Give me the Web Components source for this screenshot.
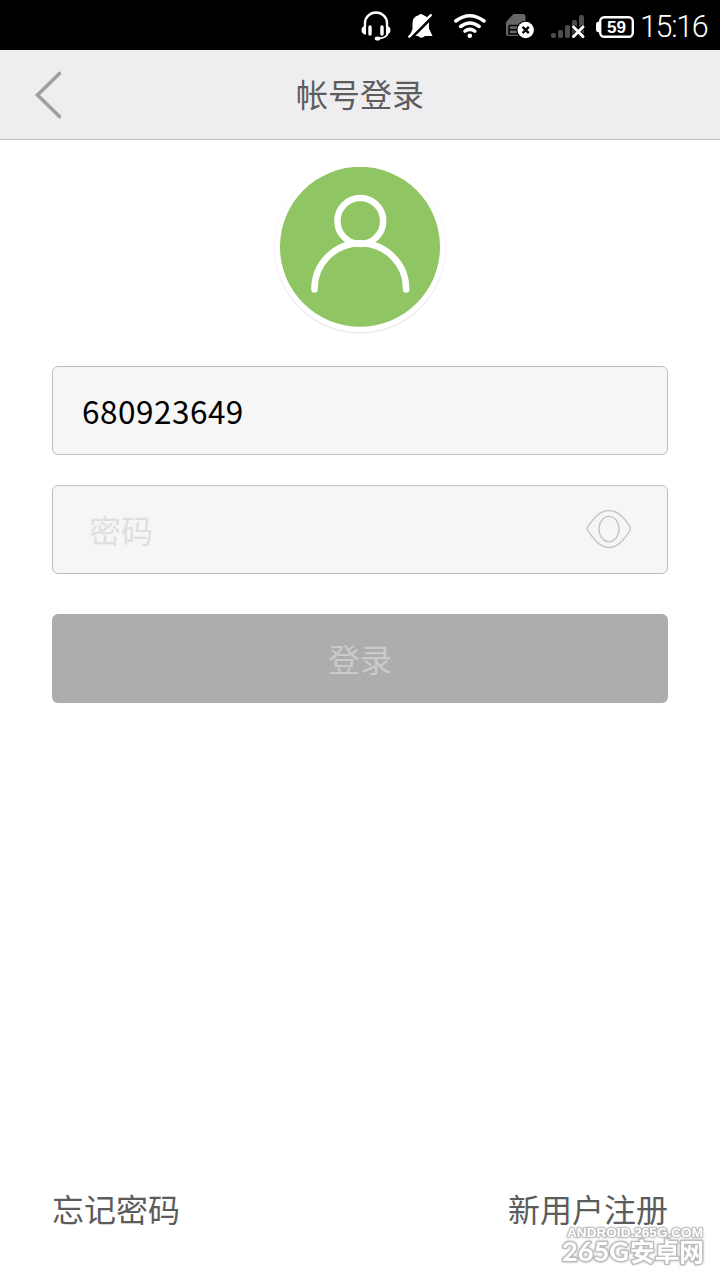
<!DOCTYPE html>
<html lang="zh-CN">
<head>
<meta charset="utf-8">
<title>帐号登录</title>
<style>
html,body{margin:0;height:100%;background:#fff}
body{font-family:"Noto Sans CJK SC",sans-serif}
</style>
</head>
<body>
<login-screen></login-screen>
<script>
const define = (name, css, html) => customElements.define(name, class extends HTMLElement {
  constructor() {
    super();
    const t = document.createElement('template');
    t.innerHTML = `<style>*{box-sizing:border-box}svg{display:block}${css}</style>${html}`;
    this.attachShadow({mode: 'open'}).append(t.content.cloneNode(true));
  }
});

define('status-bar', `
:host{display:flex;height:50px;background:#000;color:#fff;padding-left:360px;flex:none}
svg{flex:none}
.clock{font:300 30.5px/50px Roboto,sans-serif;padding-top:2px;margin-left:6px;letter-spacing:-1.35px;white-space:nowrap}
`, `
<svg width="46" height="50" viewBox="360 0 46 50" fill="none" stroke="#fff">
  <path d="M365 27v-4a11 10.500 0 0 1 22 0v4" stroke-width="2.400"/>
  <path d="M366 26h-1.500q-3 1-3 4t3 4.500H366zM386 26h1.500q3 1 3 4t-3 4.500H386z" fill="#fff" stroke="none"/>
  <path d="M370 27v7M382 27v7" stroke-width="3.400" stroke-linecap="round"/>
  <path d="M387.500 34q-1.500 4-9 4.500" stroke-width="2"/>
  <ellipse cx="377.500" cy="38.500" rx="2.800" ry="2.100" fill="#fff" stroke="none"/>
</svg>
<svg width="46" height="50" viewBox="406 0 46 50">
  <path d="M410.500 34l2-5v-6q0-6 5.500-7.500 3-3 6 0 5 1.500 5 7.500v5.500l3.500 7.500h-7.500q-3.500 3.500-7 0h-7.500z" fill="#fff"/>
  <path d="M410.500 38.800L434.500 14.800" stroke="#000" stroke-width="3"/>
  <path d="M409.300 36.700L430.800 15.200" stroke="#fff" stroke-width="2.400" stroke-linecap="round"/>
</svg>
<svg width="52" height="50" viewBox="452 0 52 50" fill="none" stroke="#fff" stroke-width="3.500" stroke-linecap="round">
  <path d="M455.700 21q14-10.500 28.400 0M460.600 26.500q9.300-7 18.600 0M465 31.200q4.900-3.600 9.800 0"/>
  <circle cx="469.800" cy="35.700" r="2.300" fill="#fff" stroke="none"/>
</svg>
<svg width="44" height="50" viewBox="504 0 44 50">
  <path d="M506 22l7.500-8H523q2.500 0 2.500 2.500V36H508q-2 0-2-2z" fill="#666"/>
  <path d="M509 25.500h12M509 25.500v8.500h12M509 29.700h10" fill="none" stroke="#000" stroke-width="1.600"/>
  <circle cx="525.500" cy="30" r="9.200" fill="#000"/><circle cx="525.700" cy="30" r="8.200" fill="#fff"/>
  <path d="M522.600 26.900l6.200 6.200m0-6.200l-6.200 6.200" stroke="#000" stroke-width="2.300"/>
</svg>
<svg width="46" height="50" viewBox="548 0 46 50">
  <g fill="#4d4d4d"><rect x="551" y="33" width="5" height="5" rx="2"/><rect x="558" y="30" width="5" height="8" rx="2"/><rect x="565" y="25" width="5" height="13" rx="2"/><rect x="572" y="20" width="5" height="18" rx="2"/><rect x="579" y="15" width="5" height="23" rx="2"/></g>
  <path d="M573.500 27l9.500 9.500m0-9.500l-9.500 9.500" stroke="#000" stroke-width="4.800"/>
  <path d="M573.500 27l9.500 9.500m0-9.500l-9.500 9.500" stroke="#fff" stroke-width="3" stroke-linecap="round"/>
</svg>
<svg width="40" height="50" viewBox="594 0 40 50">
  <path d="M601 21.500h-1.500q-3.500 0-3.500 3v5q0 3 3.500 3h1.500z" fill="#fff"/>
  <rect x="600.200" y="17.200" width="32.600" height="19.600" rx="4" fill="#000" stroke="#fff" stroke-width="2.400"/>
  <text x="607" y="33" font-family="Liberation Sans" font-size="16.500" font-weight="700" fill="#fff" textLength="19" lengthAdjust="spacingAndGlyphs">59</text>
</svg>
<span class="clock">15:16</span>`);

define('nav-header', `
:host{display:grid;grid-template-columns:96px 1fr 96px;align-items:center;height:90px;flex:none;background:#eeeef0;border-bottom:1px solid #c3c3c4;color:#5d5d5f;font-size:32px}
.title{text-align:center;line-height:44px;padding-bottom:4px}
`, `<svg width="96" height="89" viewBox="0 50 96 89"><path d="M59.500 73.500L37.500 95L59.500 116.500" fill="none" stroke="#a0a0a0" stroke-width="3.600" stroke-linecap="round"/></svg><div class="title"><slot></slot></div>`);

define('user-avatar', `
:host{display:block;width:170px;height:170px;margin:22px auto 0;border-radius:50%;border:5px solid #fff;box-shadow:0 1px 2px #e2dce2;flex:none;box-sizing:border-box}
`, `<svg width="160" height="160"><circle cx="80" cy="79.800" r="80" fill="#8fc563"/><g fill="none" stroke="#fff" stroke-width="6.500" stroke-linecap="round"><circle cx="80.300" cy="54" r="22.900"/><path d="M34.500 122.500v-1a45.800 45.300 0 0 1 91.600 0v1"/></g></svg>`);

define('text-field', `
:host{display:flex;align-items:center;justify-content:space-between;height:89px;border:1px solid #bfbfbf;border-radius:6px;background:#f6f6f6;font-size:31.500px;line-height:44px;letter-spacing:.5px;color:#000;padding:0 36px 2px 29px;box-sizing:border-box;flex:none}
:host([empty]){color:#dfdfdf;font-size:32px;letter-spacing:0;padding:0 36px 2px 36px}
`, `<slot></slot><slot name="end"></slot>`);

define('eye-icon', `:host{display:block}`,
`<svg width="45" height="40" fill="none" stroke="#c4c4c4" stroke-width="1.300"><path d="M1 19.500Q2 16 10 7.500Q16 1.500 23 1.500T36 7.500Q44 16 44.500 19.500Q44 23 36 32Q30 38.500 23 38.500T10 32Q2 23 1 19.500z"/><ellipse cx="23" cy="20" rx="10" ry="12.700"/></svg>`);

define('submit-button', `
:host{display:flex;align-items:center;justify-content:center;height:89px;border-radius:6px;background:#adadad;color:#cacaca;font-size:32px;line-height:44px;padding-bottom:2px;box-sizing:border-box;flex:none}
`, `<slot></slot>`);

define('site-mark', `:host{position:absolute;right:8px;bottom:8px;width:152px;height:50px}`,
`<svg width="152" height="50" viewBox="560 1222 152 50" style="filter:drop-shadow(0 0 1px #bbb)"><g fill="#fff" stroke="#bcbcbc" paint-order="stroke" stroke-linejoin="round" font-weight="700">
<text x="567" y="1237" font-family="Liberation Sans" font-size="12" stroke-width="1.600" textLength="136" lengthAdjust="spacingAndGlyphs">ANDROID.265G.COM</text>
<text x="562" y="1261" font-family="Lato" font-size="27" stroke-width="2.600" textLength="67" lengthAdjust="spacingAndGlyphs">265G</text>
<text x="630" y="1261" font-family="Noto Sans CJK SC" font-size="25" stroke-width="2.600" textLength="74" lengthAdjust="spacingAndGlyphs">安卓网</text></g></svg>`);

define('login-screen', `
:host{display:flex;flex-direction:column;width:720px;height:1280px;position:relative;overflow:hidden;background:#fff}
form{display:flex;flex-direction:column;margin:34px 52px 0}
text-field+text-field{margin-top:30px}
submit-button{margin-top:40px}
footer{display:flex;justify-content:space-between;margin:auto 52px 49px;font-size:32px;line-height:46px;color:#5c5c5c}
`, `
<status-bar></status-bar>
<nav-header>帐号登录</nav-header>
<user-avatar></user-avatar>
<form><text-field>680923649</text-field><text-field empty>密码<eye-icon slot="end"></eye-icon></text-field><submit-button>登录</submit-button></form>
<footer><span>忘记密码</span><span>新用户注册</span></footer>
<site-mark></site-mark>`);
</script>
</body>
</html>
